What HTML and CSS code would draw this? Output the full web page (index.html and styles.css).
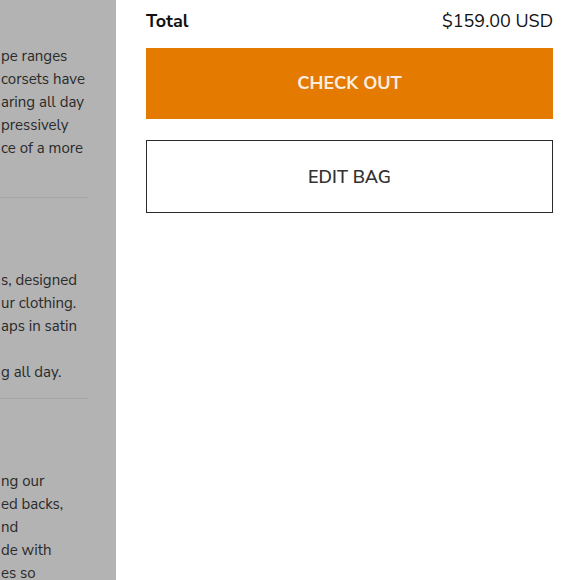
FILE: index.html
```html
<!DOCTYPE html>
<html lang="en">
<head>
<meta charset="utf-8">
<title>Bag</title>
<link rel="stylesheet" href="styles.css">
</head>
<body>
<div class="page">
  <aside class="backdrop">
    <section class="block block-first">
      <p class="line">pe ranges</p>
      <p class="line">corsets have</p>
      <p class="line">aring all day</p>
      <p class="line">pressively</p>
      <p class="line">ce of a more</p>
      <p class="line">&nbsp;</p>
    </section>
    <hr class="sep">
    <section class="block">
      <p class="line">s, designed</p>
      <p class="line">ur clothing.</p>
      <p class="line">aps in satin</p>
      <p class="line">&nbsp;</p>
      <p class="line">g all day.</p>
    </section>
    <hr class="sep">
    <section class="block">
      <p class="line">ng our</p>
      <p class="line">ed backs,</p>
      <p class="line">nd</p>
      <p class="line">de with</p>
      <p class="line">es so</p>
    </section>
  </aside>
  <main class="drawer">
    <div class="total-row">
      <span class="total-label">Total</span>
      <span class="total-value">$159.00 USD</span>
    </div>
    <button class="btn btn-checkout">CHECK OUT</button>
    <button class="btn btn-edit">EDIT BAG</button>
  </main>
</div>
</body>
</html>
```

FILE: styles.css
```css
html, body {
  margin: 0;
  padding: 0;
  height: 100%;
  overflow: hidden;
}
body {
  font-family: "Nunito Sans", Lato, "Open Sans", sans-serif;
  color: #1a1a1a;
  background: #fff;
}
.page {
  display: flex;
  height: 580px;
}
.backdrop {
  width: 116px;
  flex: none;
  background: #b3b3b3;
  overflow: hidden;
  color: #2a2a2a;
}
.block {
  padding: 71px 0 0 1px;
}
.block-first {
  padding-top: 45px;
}
.line {
  margin: 0;
  font-size: 15px;
  line-height: 23px;
  white-space: nowrap;
}
.sep {
  width: 88px;
  margin: 14px 0 0 0;
  border: 0;
  border-top: 1px solid #a6a6a6;
  height: 0;
}
.drawer {
  flex: 1;
  padding: 8px 27px 0 30px;
  display: flex;
  flex-direction: column;
}
.total-row {
  display: flex;
  justify-content: space-between;
  align-items: baseline;
  font-size: 18px;
  line-height: 26px;
  color: #111;
}
.total-label {
  font-weight: 700;
}
.btn {
  font-family: inherit;
  font-size: 18px;
  font-weight: 600;
  width: 100%;
  display: block;
  cursor: pointer;
}
.btn-checkout {
  margin-top: 14px;
  height: 71px;
  padding-top: 0;
  padding-bottom: 2px;
  background: #e47a00;
  color: #fbeee0;
  border: 0;
  font-weight: 700;
}
.btn-edit {
  margin-top: 21px;
  height: 73px;
  background: #fff;
  color: #333;
  border: 1px solid #2a2a2a;
}
```
